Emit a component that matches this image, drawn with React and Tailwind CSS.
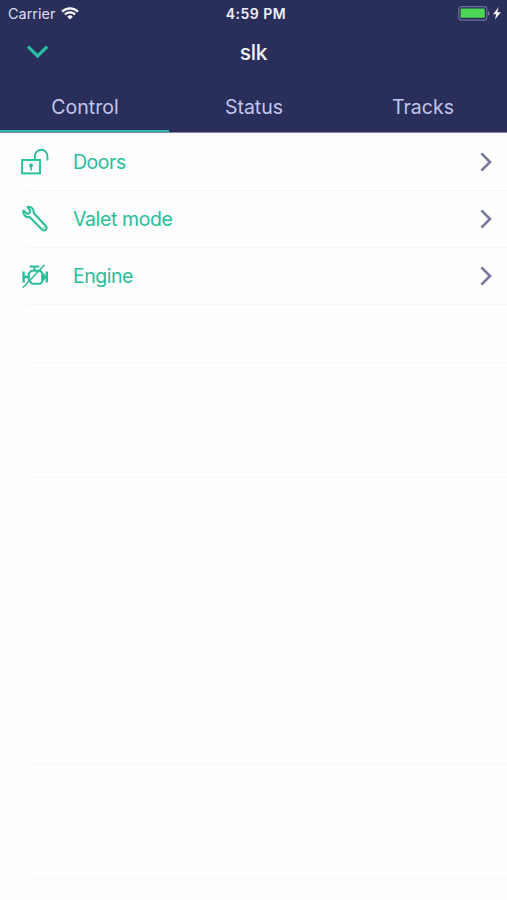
import React from 'react';

const DoorsIcon = () => (
  <svg width="32" height="32" viewBox="0 0 32 32" fill="none" stroke="currentColor" strokeWidth="1.9">
    <rect x="4.1" y="14" width="17.9" height="13.4" />
    <path d="M17 14V10a6.2 6.2 0 0 1 12.4 0v4.4" />
    <path d="M13 20v4.6" strokeWidth="1.6" />
    <circle cx="13" cy="19.4" r="1.9" fill="currentColor" stroke="none" />
  </svg>
);

const WrenchIcon = () => (
  <svg width="32" height="32" viewBox="0 0 32 32" fill="none" stroke="currentColor" strokeWidth="2" strokeLinejoin="round">
    <path d="M9.6 3.9C13 3.2 16.4 6 15.6 10L28 23.2C30 25.9 26.6 28.8 24.2 26.8L11.6 14C7.6 14.8 4.4 11.4 5.4 7.6L8.8 10.6C10.6 11.4 12.7 9.4 12 7.4Z" />
    <circle cx="25.7" cy="24.8" r="0.8" fill="currentColor" stroke="none" />
  </svg>
);

const EngineIcon = () => (
  <svg width="32" height="32" viewBox="0 0 32 32" fill="none" stroke="currentColor" strokeWidth="2">
    <path d="M11.6 6.5h9.8M16.5 6.5v4.2" strokeWidth="2.1" />
    <path d="M13.4 10.8h8.8l2 2v9l-2 2h-8l-3.4-3.4v-7z" />
    <path d="M5.6 11.6v11M5.6 17h5.2" strokeWidth="2.4" />
    <path d="M24.2 17h4.6M28.8 11.6v11M25.6 13.4v7.2" strokeWidth="2.4" />
    <path d="M4.8 27.8L26.6 4.8" strokeWidth="1.5" />
  </svg>
);

const WifiIcon = () => (
  <svg width="18" height="14" viewBox="0 0 18 14" fill="none" stroke="currentColor" strokeWidth="2.2">
    <path d="M1.1 4.6a11.2 11.2 0 0 1 15.8 0" />
    <path d="M3.9 7.5a7.2 7.2 0 0 1 10.2 0" />
    <path d="M6.2 9.7a4 4 0 0 1 5.6 0L9 12.4z" fill="currentColor" stroke="none" />
  </svg>
);

const BatteryIcon = () => (
  <svg width="44" height="16" viewBox="0 0 44 16">
    <rect x="0.8" y="0.7" width="28" height="13.4" rx="2.8" fill="none" stroke="#6d7098" strokeWidth="1.2" />
    <rect x="2.6" y="2.6" width="24.2" height="9.2" rx="0.9" fill="#4cd753" />
    <path d="M30 5.2c1.8.5 1.8 3.9 0 4.4z" fill="#8184a7" />
    <path d="M40.8 1L35 8.2h3.2l-1.2 5.4 5.8-7.4h-3.6z" fill="#fff" />
  </svg>
);

const Chevron = () => (
  <svg width="14" height="20" viewBox="0 0 14 20" fill="none" stroke="#777a98" strokeWidth="2.7">
    <path d="M2.4 1.4L11 10 2.4 18.6" />
  </svg>
);

const tabs = ['Control', 'Status', 'Tracks'];

const items = [
  { label: 'Doors', icon: DoorsIcon, spacing: 'tracking-[-0.45px]' },
  { label: 'Valet mode', icon: WrenchIcon, spacing: 'tracking-[-0.4px]' },
  { label: 'Engine', icon: EngineIcon, spacing: 'tracking-[-0.5px]' },
];

const emptyRows = [
  'border-[#f8f8f9]',
  'border-[#fcfcfd]',
  'border-[#f8f8f9]',
  'border-[#fbfbfc]',
  'border-transparent',
  'border-[#f9f9fa]',
  'border-[#fbfbfc]',
  'border-[#f7f7f8]',
  'border-[#fbfbfc]',
  'border-[#f9f9fa]',
];

const StatusBar = () => (
  <div className="grid h-[27px] grid-cols-3 items-center pl-[8px] pr-[5px] text-white">
    <div className="flex items-center gap-[6px]">
      <span className="text-[14.5px] leading-[27px] tracking-[-0.02px] text-[#dcddef]">Carrier</span>
      <WifiIcon />
    </div>
    <span className="pl-[2px] text-center text-[14px] font-semibold leading-[27px] tracking-[0.5px] text-[#eeeefa]">4:59 PM</span>
    <div className="flex justify-end">
      <BatteryIcon />
    </div>
  </div>
);

const App = () => {
  return (
    <div className="flex h-[900px] w-[507px] flex-col overflow-hidden bg-[#fefefe] font-['Inter','Liberation_Sans',sans-serif]">
      <header className="flex h-[133px] shrink-0 flex-col border-b border-[#8583a2] bg-[#2a2e5a]">
        <StatusBar />
        <div className="grid h-[52px] grid-cols-3 items-center">
          <button className="flex pb-[3px] pl-[26px]">
            <svg width="24" height="16" viewBox="0 0 24 16" fill="none" stroke="#29bfa5" strokeWidth="3.2">
              <path d="M2 2.6l9.6 9.4 9.6-9.4" />
            </svg>
          </button>
          <h1 className="text-center text-[21px] font-medium leading-[52px] tracking-[-0.3px] text-[#f3f3fb]">slk</h1>
        </div>
        <nav className="grid h-[53px] shrink-0 grid-cols-3">
          {tabs.map((tab, i) => (
            <button
              key={tab}
              className={`pl-px pt-[5px] text-center text-[19.5px] leading-[46px] text-[#c3c6ee] ${
                i === 0 ? 'border-b-2 border-[#29b5a0]' : 'border-b-2 border-transparent'
              }`}
            >
              {tab}
            </button>
          ))}
        </nav>
      </header>

      <ul className="flex flex-col pt-[0.5px]">
        {items.map(({ label, icon: Icon, spacing }) => (
          <li key={label} className="ml-[27px] h-[57.3px] border-b border-[#f5f5f7]">
            <div className="-ml-[9px] flex h-full items-center pr-[14px] text-[#29bd99]">
              <Icon />
              <span className={`ml-[23px] flex-1 text-[19.5px] leading-7 ${spacing}`}>{label}</span>
              <Chevron />
            </div>
          </li>
        ))}
        {emptyRows.map((border, i) => (
          <li key={i} className={`ml-[27px] h-[57.45px] shrink-0 border-b ${border}`} />
        ))}
      </ul>
    </div>
  );
};

export default App;
